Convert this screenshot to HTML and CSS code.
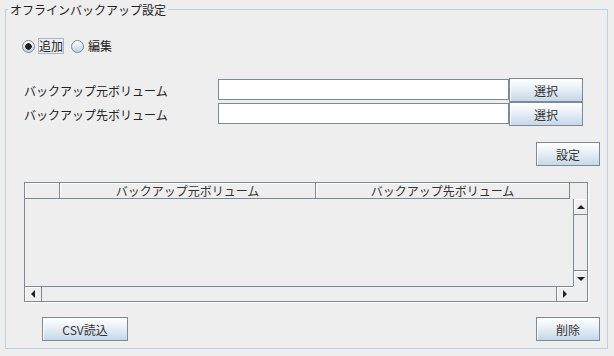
FILE: index.html
```html
<!DOCTYPE html>
<html lang="ja">
<head>
  <meta charset="UTF-8">
  <title>オフラインバックアップ設定</title>
  <link rel="stylesheet" href="styles.css">
</head>
<body>

  <fieldset class="panel">
    <legend>オフラインバックアップ設定</legend>

    <div class="mode">
      <label class="radio focus"><input type="radio" name="mode" checked><span>追加</span></label>
      <label class="radio"><input type="radio" name="mode"><span>編集</span></label>
    </div>

    <div class="volumes">
      <label for="src">バックアップ元ボリューム</label>
      <input type="text" id="src">
      <button class="btn">選択</button>

      <label for="dst">バックアップ先ボリューム</label>
      <input type="text" id="dst">
      <button class="btn">選択</button>
    </div>

    <div class="actions">
      <button class="btn btn-small">設定</button>
    </div>

    <div class="scrollpane">
      <div class="header">
        <div class="th"></div>
        <div class="th">バックアップ元ボリューム</div>
        <div class="th">バックアップ先ボリューム</div>
      </div>
      <div class="corner"></div>
      <div class="viewport"></div>
      <div class="vbar">
        <span class="arrow-btn"><span class="tri up"></span></span>
        <span class="track"></span>
        <span class="arrow-btn"><span class="tri down"></span></span>
      </div>
      <div class="hbar">
        <span class="arrow-btn"><span class="tri left"></span></span>
        <span class="track"></span>
        <span class="arrow-btn"><span class="tri right"></span></span>
      </div>
      <div class="corner"></div>
    </div>

    <div class="footer">
      <button class="btn btn-csv">CSV読込</button>
      <button class="btn btn-small">削除</button>
    </div>
  </fieldset>

</body>
</html>
```

FILE: styles.css
```css
body {
  margin: 0;
  background: #eeeeee;
  font-family: "Noto Sans CJK JP", "DejaVu Sans", sans-serif;
  font-size: 12px;
  color: #222;
}
.panel {
  margin: 2px 6px 0 5px;
  padding: 21px 7px 7px 18px;
  border: 1px solid #b8cfe5;
  min-width: 0;
}
.panel legend {
  margin-left: -16px;
  padding: 0 2px;
  line-height: 15px;
  color: #222;
}

/* radio buttons */
.mode {
  display: flex;
  align-items: center;
  gap: 7px;
  margin-left: -2px;
  height: 16px;
}
.radio {
  display: flex;
  align-items: center;
  gap: 3px;
}
.radio input {
  appearance: none;
  margin: 0;
  width: 13px;
  height: 13px;
  border-radius: 50%;
  border: 1px solid #7a8a99;
  background: linear-gradient(#ffffff, #dde8f3 50%, #b8cfe5);
}
.radio input:checked {
  background: radial-gradient(circle, #222 0, #222 3px, transparent 3.5px),
              linear-gradient(#ffffff, #dde8f3 50%, #b8cfe5);
}
.radio span {
  border: 1px solid transparent;
  line-height: 14px;
}
.radio.focus span {
  border-color: #a3b8cc;
}

/* source / destination */
.volumes {
  display: grid;
  grid-template-columns: 194px 291px 74px;
  grid-auto-rows: 24px;
  align-items: center;
  margin-top: 24px;
}
.volumes input {
  align-self: start;
  margin: 1px 0 0;
  height: 21px;
  box-sizing: border-box;
  border: 1px solid #7a8a99;
  background: #fff;
  padding: 0 2px;
  font: inherit;
}

.btn {
  height: 24px;
  box-sizing: border-box;
  border: 1px solid #7a8a99;
  background: linear-gradient(#ffffff, #eef3f8 35%, #c6d7e9);
  box-shadow: inset 1px 1px 0 #fff;
  font: inherit;
  color: #333;
  padding: 0;
}
.btn-small {
  width: 64px;
}
.btn-csv {
  width: 86px;
}

.actions {
  display: flex;
  justify-content: flex-end;
  margin-top: 16px;
}

/* table */
.scrollpane {
  margin-top: 16px;
  width: 564px;
  height: 120px;
  box-sizing: border-box;
  border: 1px solid #7a8a99;
  box-shadow: 1px 1px 0 #fff;
  display: grid;
  grid-template-columns: 548px 14px;
  grid-template-rows: 16px 87px 15px;
}
.header {
  display: grid;
  grid-template-columns: 35px 256px 254px;
}
.th {
  border-right: 1px solid #7a8a99;
  border-bottom: 1px solid #7a8a99;
  box-shadow: inset 1px 1px 0 #fff;
  text-align: center;
  line-height: 15px;
  white-space: nowrap;
  color: #333;
}
.viewport {
  background: #eeeeee;
}
.vbar {
  display: flex;
  flex-direction: column;
  border-left: 1px solid #7a8a99;
}
.hbar {
  display: flex;
  border-top: 1px solid #7a8a99;
}
.track {
  flex: 1;
}
.arrow-btn {
  display: flex;
  align-items: center;
  justify-content: center;
  background: #eeeeee;
  box-shadow: inset 1px 1px 0 #fff;
}
.vbar .arrow-btn {
  height: 15px;
}
.vbar .arrow-btn:first-child {
  border-bottom: 1px solid #7a8a99;
}
.vbar .arrow-btn:last-child {
  border-top: 1px solid #7a8a99;
}
.hbar .arrow-btn {
  width: 16px;
}
.hbar .arrow-btn:first-child {
  border-right: 1px solid #7a8a99;
}
.hbar .arrow-btn:last-child {
  border-left: 1px solid #7a8a99;
}
.tri {
  width: 0;
  height: 0;
}
.tri.up {
  border-left: 4px solid transparent;
  border-right: 4px solid transparent;
  border-bottom: 4px solid #222;
}
.tri.down {
  border-left: 4px solid transparent;
  border-right: 4px solid transparent;
  border-top: 4px solid #222;
}
.tri.left {
  border-top: 4px solid transparent;
  border-bottom: 4px solid transparent;
  border-right: 4px solid #222;
}
.tri.right {
  border-top: 4px solid transparent;
  border-bottom: 4px solid transparent;
  border-left: 4px solid #222;
}

.footer {
  display: flex;
  justify-content: space-between;
  margin-top: 15px;
  padding-left: 18px;
}
```
